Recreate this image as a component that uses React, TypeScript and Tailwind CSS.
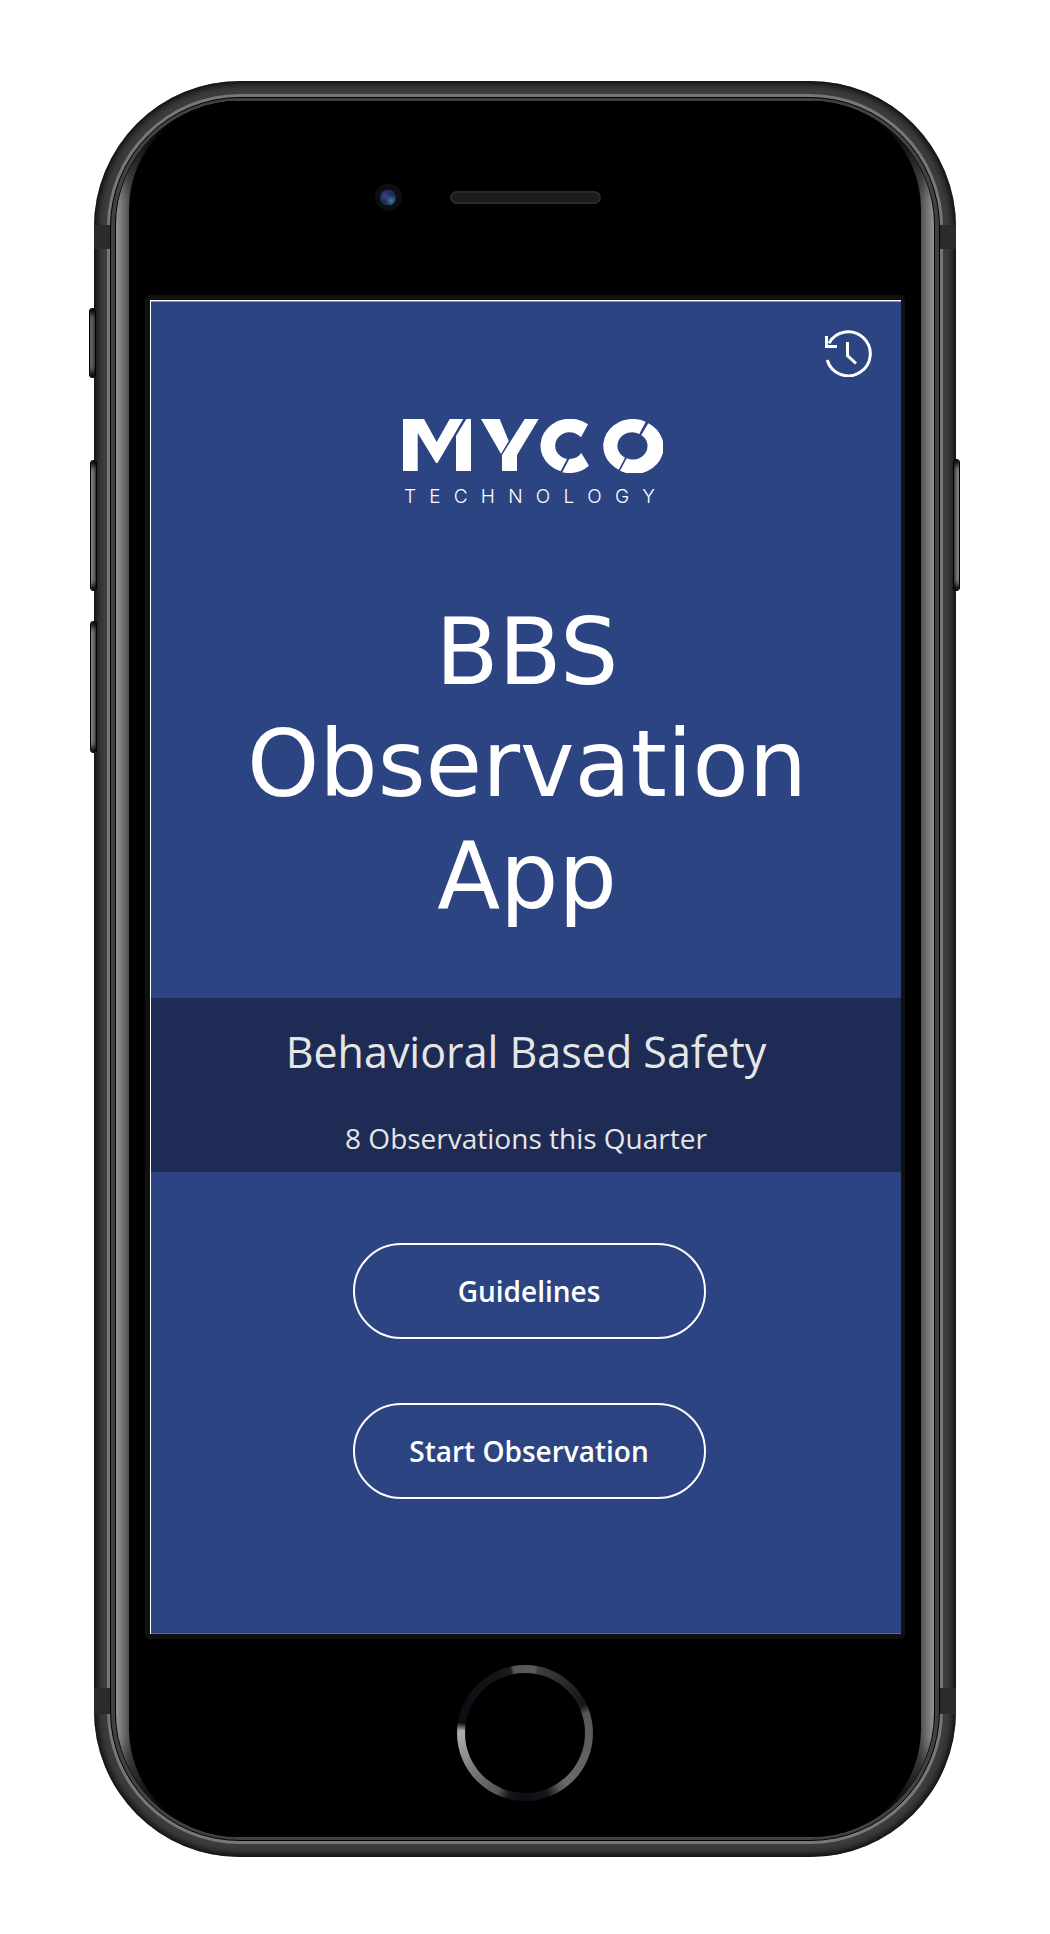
import type { ReactNode } from "react";

function MycoLogo() {
  return (
    <svg
      viewBox="0 0 260 54"
      className="h-[54px] w-[260px]"
      role="img"
      aria-label="MYCO"
      fill="#fff"
    >
      <path d="M0 0h21l12.700 23L46.700 0h13.600L34.500 44h-1.500L14.700 14v38H0z" />
      <path d="M63.300 0H68v52H53V17z" />
      <path d="M78 0h18.700l9 22-7.700 13z" />
      <path d="M121.700 0h14L114 36v16H99V36z" />
      <path d="M185 5.300A29.500 27 0 1 0 157.700 52.300L164 40A14.500 13.500 0 1 1 178 18.300z" />
      <path d="M159.300 53.300A29.500 27 0 0 0 186 46.700L178.300 34A14.500 13.500 0 0 1 166.300 40z" />
      <path d="M242.700 2.700A29.500 27 0 0 0 215.700 50.700L222 38.700A14.700 13.500 0 0 1 236.300 15z" />
      <path d="M245.300 4.300A29.500 27 0 0 1 217 51.700L223.700 39.300A14.700 13.500 0 0 0 238.300 16z" />
    </svg>
  );
}

function HistoryIcon() {
  return (
    <svg
      viewBox="0 0 48 48"
      className="size-12"
      fill="none"
      stroke="#fff"
      strokeWidth="3"
      aria-hidden="true"
    >
      <path d="M2.200 31A22 22 0 1 0 4 14.200" />
      <path d="M1.500 7v10.500H12" />
      <path d="M22.500 13v13.500l8.500 8" />
    </svg>
  );
}

function SideKey({ className }: { className: string }) {
  return (
    <span
      className={`absolute w-[7px] rounded-[3px] border border-black shadow-[inset_0_8px_6px_-4px_#000,inset_0_-8px_6px_-4px_#000] ${className}`}
    />
  );
}

function Antenna({ className }: { className: string }) {
  return <span className={`absolute w-4 bg-[#2b2b2d] ${className}`} />;
}

function PillButton({ children }: { children: ReactNode }) {
  return (
    <button
      type="button"
      className="h-24 w-[353px] max-w-full rounded-full border-2 border-white font-['Open_Sans',sans-serif] text-[28px] leading-9 font-semibold text-white"
    >
      {children}
    </button>
  );
}

function Screen() {
  return (
    <main className="flex flex-col items-center border-t border-b border-t-[#8a94b5] border-b-[#59699a] bg-[#2c4481] text-white">
      <div className="flex w-full justify-end px-7 pt-[27px]">
        <button type="button" aria-label="History">
          <HistoryIcon />
        </button>
      </div>

      <div className="mt-[42px] ml-3.5 flex w-[260px] flex-col items-center">
        <MycoLogo />
        <div className="mt-3 flex w-full justify-between pr-2 pl-px font-['Inter',sans-serif] text-[19px] leading-6 font-light">
          {"TECHNOLOGY".split("").map((letter, i) => (
            <span key={i}>{letter}</span>
          ))}
        </div>
      </div>

      <h1 className="mt-[88px] max-w-[600px] pl-0.5 text-center font-['DejaVu_Sans',sans-serif] text-[92px] leading-[112px]">
        BBS Observation App
      </h1>

      <section className="mt-[65px] w-full bg-[#1e2b54] pt-6 pb-3.5 text-center font-['Open_Sans',sans-serif] text-[#e6e6e6]">
        <h2 className="text-[43px] leading-[60px]">Behavioral Based Safety</h2>
        <p className="mt-9 text-[28px] leading-10">8 Observations this Quarter</p>
      </section>

      <div className="mt-[71px] mb-[134px] flex flex-col items-center gap-16 pl-1.5">
        <PillButton>Guidelines</PillButton>
        <PillButton>Start Observation</PillButton>
      </div>
    </main>
  );
}

export default function App() {
  return (
    <div className="bg-white px-[94px] pt-[81px] pb-[77px]">
      <div className="relative mx-auto max-w-[862px]">
        <SideKey className="top-[227px] -left-[5px] h-[70px] bg-linear-to-r from-[#777] to-[#444]" />
        <SideKey className="top-[379px] -left-1 h-[131px] bg-linear-to-r from-[#a0a19d] to-[#444]" />
        <SideKey className="top-[540px] -left-1 h-[132px] bg-linear-to-r from-[#a0a19d] to-[#444]" />
        <SideKey className="top-[378px] -right-1 h-[132px] bg-linear-to-l from-[#a0a19d] to-[#444]" />
        <div className="rounded-[146px] bg-[#3d3d3f] p-[13px] shadow-[inset_0_0_9px_2px_#000]">
          <div className="rounded-[133px] bg-[#77777a] p-[3px]">
            <div className="rounded-[130px] border border-black bg-[#42423c] px-1 py-[3px]">
              <div className="rounded-[125px] border-r border-l border-black bg-black">
                <div className="rounded-[124px] bg-[linear-gradient(to_bottom,#000_10px,transparent_100px,transparent_calc(100%-100px),#000_calc(100%-10px)),linear-gradient(to_right,#949494,#4c4c4c_14px,#222_50px,#222_calc(100%-50px),#4c4c4c_calc(100%-14px),#949494)] px-[13px]">
                  <div className="rounded-[108px] bg-black px-4">
                    <div className="flex h-[194px] items-center justify-center pb-0.5">
                      <span className="relative h-[13px] w-[151px] rounded-full border-2 border-[#2b2b2b] bg-[#1c1c1c]">
                        <span className="absolute top-1/2 right-full mr-[50px] flex size-[27px] -translate-y-1/2 items-center justify-center rounded-full bg-[#0e0e0e]">
                          <span className="size-4 rounded-full bg-[radial-gradient(circle_at_70%_70%,#3f7ea0_0%,transparent_35%),radial-gradient(circle_at_35%_40%,#4a3f86_0%,transparent_40%),linear-gradient(#1b2c55,#15355a)]" />
                        </span>
                      </span>
                    </div>
                    <div className="rounded-[5px] bg-[#111] pt-[5px] pr-1 pb-[5px] pl-[5px]">
                      <div className="border-t border-l border-white">
                        <Screen />
                      </div>
                    </div>
                    <div className="flex h-[198px] items-start justify-center pt-[26px]">
                      <button
                        type="button"
                        aria-label="Home"
                        className="size-[136px] rounded-full bg-[conic-gradient(from_0deg,#59595c_0deg,#59595c_9deg,#3f3f42_12deg,#18181c_60deg,#18181c_65deg,#55555a_72deg,#6a6a6e_140deg,#55555a_148deg,#15161b_160deg,#0d0f15_185deg,#17181d_195deg,#55555a_205deg,#7a7a7c_235deg,#adadad_270deg,#adadad_272deg,#0c0c12_279deg,#121217_330deg,#1c1c20_347deg,#55555a_350deg,#59595c_360deg)] p-2"
                      >
                        <span className="block size-full rounded-full bg-black" />
                      </button>
                    </div>
                  </div>
                </div>
              </div>
            </div>
          </div>
        </div>
        <Antenna className="top-36 left-0 h-6" />
        <Antenna className="top-36 right-0 h-6" />
        <Antenna className="bottom-[143px] left-0 h-[26px]" />
        <Antenna className="right-0 bottom-[143px] h-[26px]" />
      </div>
    </div>
  );
}
